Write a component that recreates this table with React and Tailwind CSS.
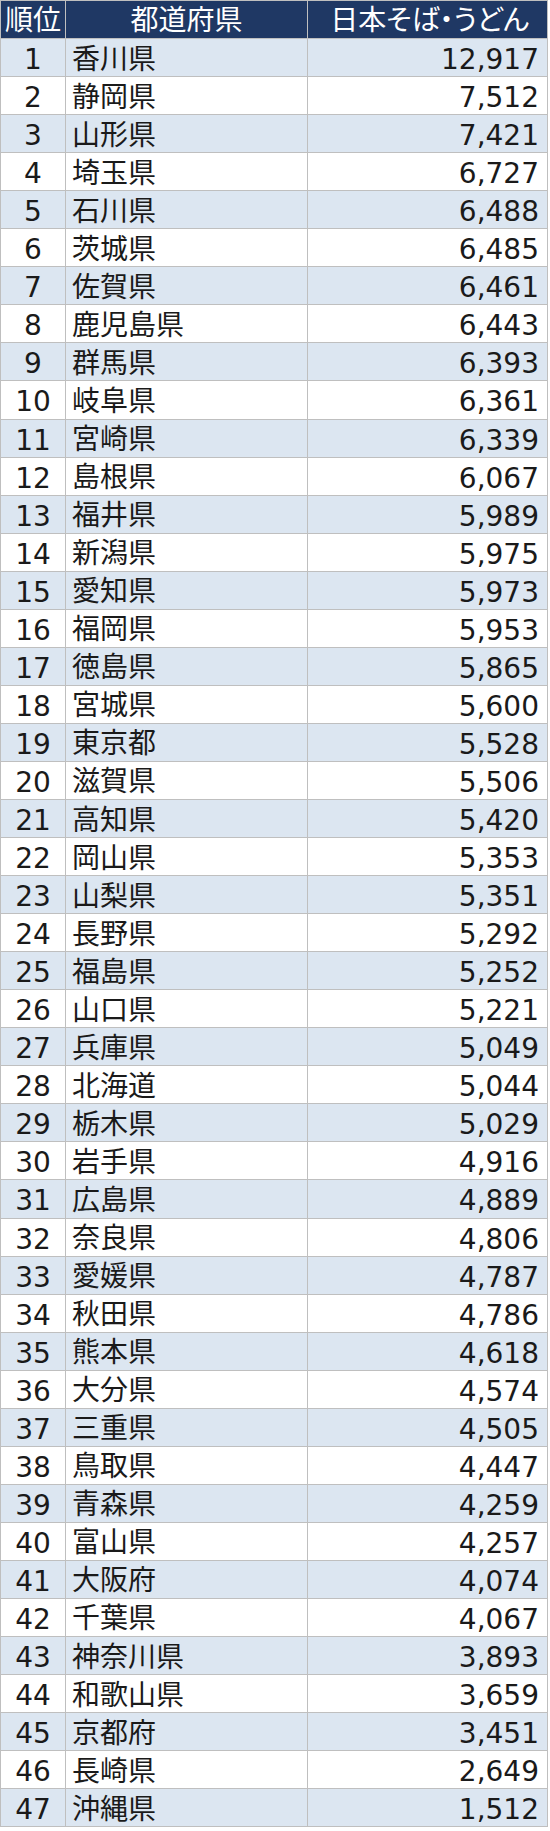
import React from "react";

const data = [
  ["香川県", "12,917"],
  ["静岡県", "7,512"],
  ["山形県", "7,421"],
  ["埼玉県", "6,727"],
  ["石川県", "6,488"],
  ["茨城県", "6,485"],
  ["佐賀県", "6,461"],
  ["鹿児島県", "6,443"],
  ["群馬県", "6,393"],
  ["岐阜県", "6,361"],
  ["宮崎県", "6,339"],
  ["島根県", "6,067"],
  ["福井県", "5,989"],
  ["新潟県", "5,975"],
  ["愛知県", "5,973"],
  ["福岡県", "5,953"],
  ["徳島県", "5,865"],
  ["宮城県", "5,600"],
  ["東京都", "5,528"],
  ["滋賀県", "5,506"],
  ["高知県", "5,420"],
  ["岡山県", "5,353"],
  ["山梨県", "5,351"],
  ["長野県", "5,292"],
  ["福島県", "5,252"],
  ["山口県", "5,221"],
  ["兵庫県", "5,049"],
  ["北海道", "5,044"],
  ["栃木県", "5,029"],
  ["岩手県", "4,916"],
  ["広島県", "4,889"],
  ["奈良県", "4,806"],
  ["愛媛県", "4,787"],
  ["秋田県", "4,786"],
  ["熊本県", "4,618"],
  ["大分県", "4,574"],
  ["三重県", "4,505"],
  ["鳥取県", "4,447"],
  ["青森県", "4,259"],
  ["富山県", "4,257"],
  ["大阪府", "4,074"],
  ["千葉県", "4,067"],
  ["神奈川県", "3,893"],
  ["和歌山県", "3,659"],
  ["京都府", "3,451"],
  ["長崎県", "2,649"],
  ["沖縄県", "1,512"],
];

export default function App() {
  return (
    <div className="w-[550px] h-[1831px] bg-white font-['DejaVu_Sans','Noto_Sans_CJK_JP',sans-serif] text-[28px] text-[#1a1a1a]">
      <div className="w-[548px] border-t border-l border-[#bfbfbf]">
        <div className="flex h-[38.06px] bg-[#1f3864] text-white [font-feature-settings:'palt']">
          <div className="w-[65px] shrink-0 border-r border-b border-[#bfbfbf] flex items-center justify-center leading-none pt-[2px]">順位</div>
          <div className="w-[242px] shrink-0 border-r border-b border-[#bfbfbf] flex items-center justify-center leading-none pt-[2px]">都道府県</div>
          <div className="flex-1 border-r border-b border-[#bfbfbf] flex items-center justify-end pr-[18px] leading-none pt-[2px] whitespace-nowrap">日本そば・うどん</div>
        </div>
        {data.map(([name, val], i) => (
          <div
            key={i}
            className={
              "flex h-[38.06px] " + (i % 2 === 0 ? "bg-[#dce6f1]" : "bg-white")
            }
          >
            <div className="w-[65px] shrink-0 border-r border-b border-[#bfbfbf] flex items-center justify-center leading-none pt-[5px]">
              {i + 1}
            </div>
            <div className="w-[242px] shrink-0 border-r border-b border-[#bfbfbf] flex items-center pl-[6px] leading-none pt-[4px]">
              {name}
            </div>
            <div className="flex-1 border-r border-b border-[#bfbfbf] flex items-center justify-end pr-[8px] leading-none pt-[5px]">
              {val}
            </div>
          </div>
        ))}
      </div>
    </div>
  );
}
